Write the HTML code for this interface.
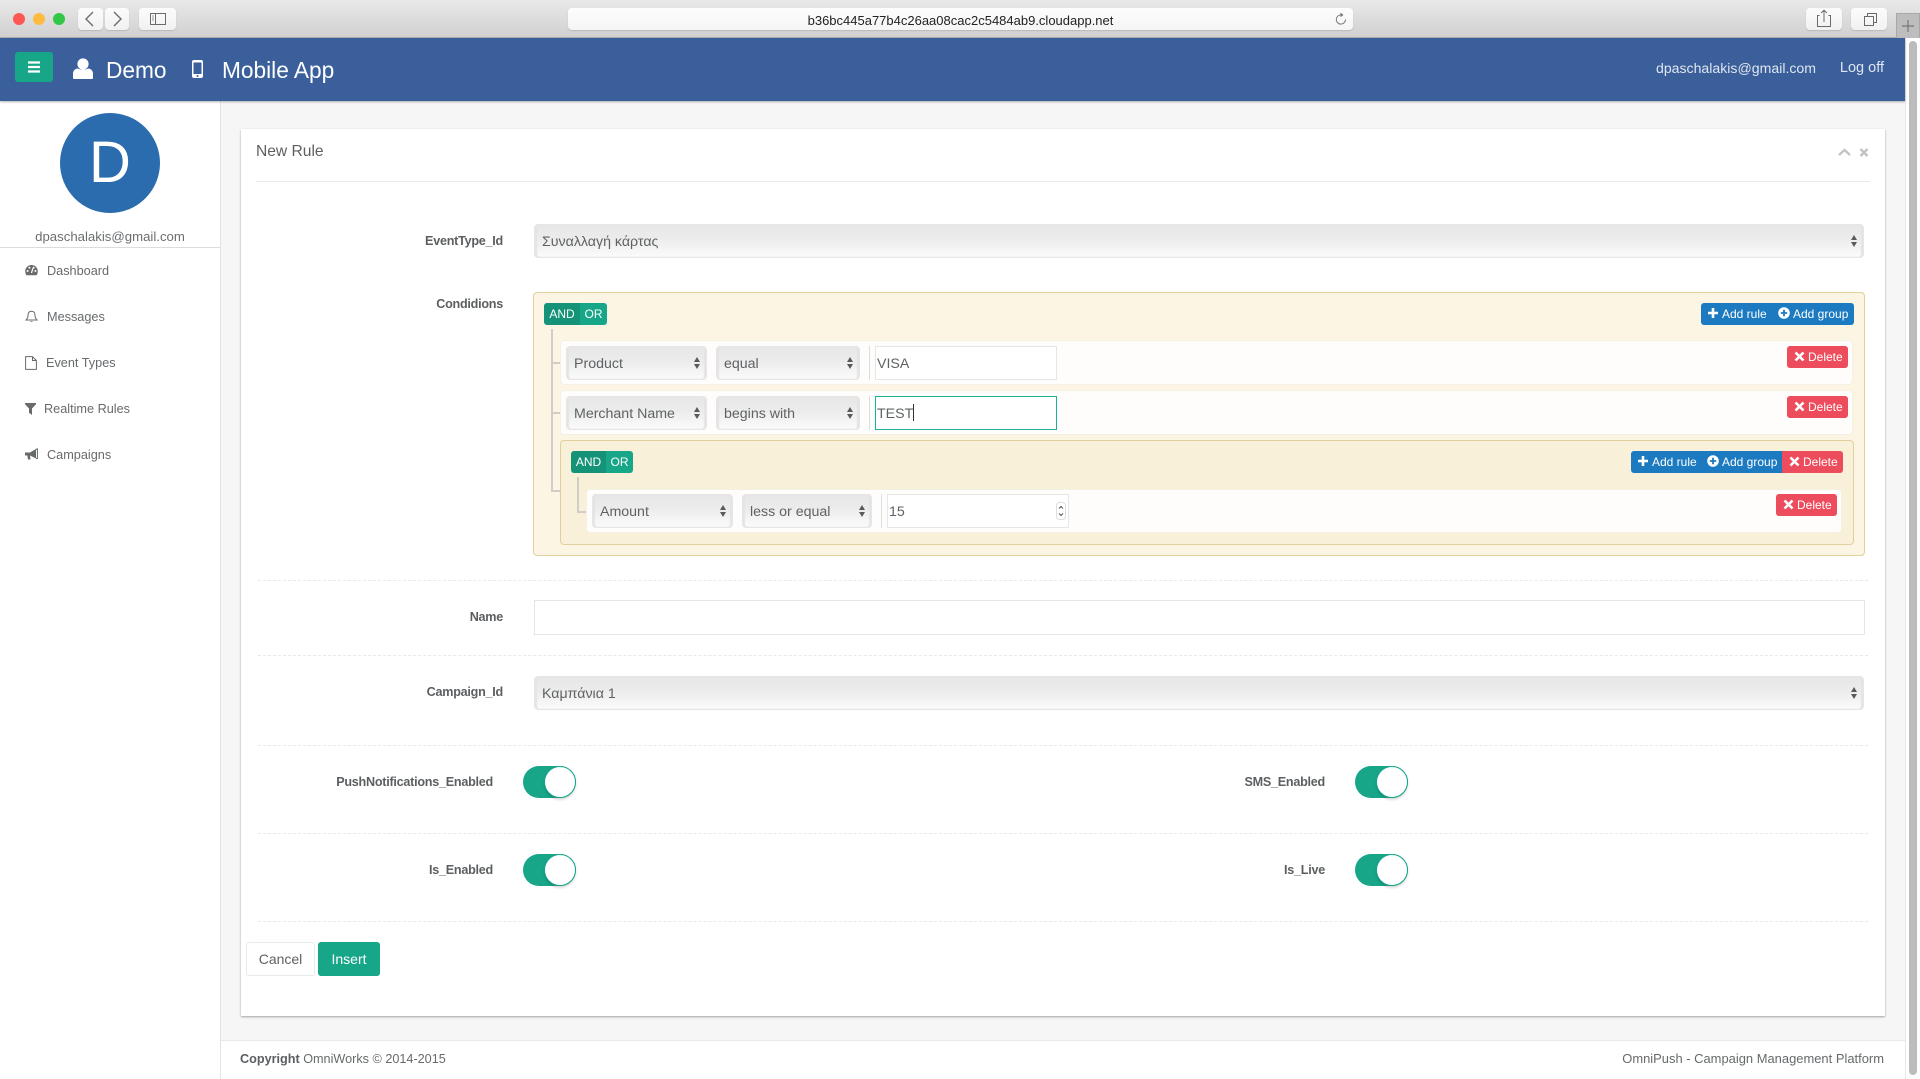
<!DOCTYPE html>
<html><head><meta charset="utf-8"><title>New Rule</title>
<style>
html,body{margin:0;padding:0;width:1920px;height:1079px;overflow:hidden;background:#f6f6f6}
body{position:relative;font-family:"Liberation Sans","Noto Sans CJK SC",sans-serif;color:#676a6c;font-size:13px}
.a{position:absolute;box-sizing:border-box}
.t{position:absolute;white-space:nowrap}
.lb{position:absolute;white-space:nowrap;font-weight:bold;font-size:12.6px;letter-spacing:-.25px;color:#5c5f61;line-height:20px}
.sel{position:absolute;box-sizing:border-box;border:1px solid #e6e6e6;border-radius:4px;background:linear-gradient(#e7e7e7,#ececec 45%,#fbfbfb);box-shadow:inset -2px 0 1px #e4e4e4,inset 2px 0 1px #e4e4e4;color:#5f6264;font-size:14.2px;line-height:34px;padding-left:7px;white-space:nowrap}
.sel svg{position:absolute;right:5px;top:50%;margin-top:-7px}
.inp{position:absolute;box-sizing:border-box;border:1px solid #e5e6e7;background:#fff;color:#5f6264;font-size:14.2px;line-height:34px;padding-left:1px;white-space:nowrap}
.btn{position:absolute;box-sizing:border-box;height:22px;line-height:22px;color:#fff;font-size:12px;white-space:nowrap}
.g{background:#18a689}.gd{background:#159378}.b{background:#1c7ac0}.r{background:#ed4c5c}
.btn svg{vertical-align:-1px;margin-right:3px}
.grp{position:absolute;box-sizing:border-box;border:1px solid #e3cf9d;border-radius:4px}
.rule{position:absolute;box-sizing:border-box;background:#fefdfb;border:1px solid #f4f0e4;border-radius:4px}
.ln{position:absolute;background:#cfcdc6}
.dash{position:absolute;left:258px;width:1610px;height:0;border-top:1px dashed #e7eaec}
.tog{position:absolute;width:53px;height:32px;border-radius:16px;background:#18a689}
.tog i{position:absolute;right:0;top:0;width:32px;height:32px;border-radius:50%;background:#fff;box-sizing:border-box;border:1px solid #18a689;box-shadow:0 2px 2px rgba(0,0,0,.15)}
.nav{position:absolute;white-space:nowrap;font-size:12.7px;color:#676a6c;line-height:18px}
.cb{position:absolute;box-sizing:border-box;height:22px;top:8px;background:linear-gradient(#fcfcfc,#f1f1f1);border-radius:4px;box-shadow:0 1px 1px #b9b9b9}
svg{display:block}
.btn svg{display:inline-block}
</style></head><body>

<!-- browser chrome -->
<div class="a" style="left:0;top:0;width:1920px;height:38px;background:linear-gradient(#e9e9e9,#d0d0d0);border-bottom:1px solid #aeaeae"></div>
<div class="a" style="left:13px;top:13px;width:12px;height:12px;border-radius:50%;background:#fc5753"></div>
<div class="a" style="left:33px;top:13px;width:12px;height:12px;border-radius:50%;background:#fdbc40"></div>
<div class="a" style="left:53px;top:13px;width:12px;height:12px;border-radius:50%;background:#33c748"></div>
<div class="cb" style="left:78px;width:25px"><svg width="25" height="22"><path d="M15 4L8 11L15 18" fill="none" stroke="#6b6b6b" stroke-width="1.4"/></svg></div>
<div class="cb" style="left:105px;width:24px"><svg width="24" height="22"><path d="M9 4L16 11L9 18" fill="none" stroke="#6b6b6b" stroke-width="1.4"/></svg></div>
<div class="cb" style="left:139px;width:37px"><svg width="37" height="22"><rect x="11.5" y="5.5" width="15" height="11" fill="none" stroke="#6b6b6b"/><path d="M16.5 5.5V16.5" stroke="#6b6b6b"/><path d="M13 8h2M13 10h2M13 12h2" stroke="#9a9a9a"/></svg></div>
<div class="cb" style="left:568px;width:785px;background:linear-gradient(#fdfdfd,#f5f5f5)"></div>
<div class="t" style="left:568px;width:785px;top:9px;text-align:center;line-height:23px;font-size:13px;color:#222">b36bc445a77b4c26aa08cac2c5484ab9.cloudapp.net</div>
<svg class="a" style="left:1334px;top:11px" width="14" height="16"><path d="M11.5 8.5A4.6 4.6 0 1 1 7 3.9" fill="none" stroke="#777" stroke-width="1"/><path d="M6.5 1.5L9.5 4L6.5 6.2Z" fill="#777"/></svg>
<div class="cb" style="left:1806px;width:36px"><svg width="36" height="22"><path d="M13.5 8.5H11.5V19.5H24.5V8.5H22.5" transform="translate(0,-1)" fill="none" stroke="#6b6b6b"/><path d="M18 14V2.5M15 5L18 2.2L21 5" fill="none" stroke="#6b6b6b"/></svg></div>
<div class="cb" style="left:1851px;width:36px"><svg width="36" height="22"><rect x="13.5" y="8.5" width="9" height="9" fill="none" stroke="#6b6b6b"/><path d="M16.5 8V5.5H25.5V14.5H23" fill="none" stroke="#6b6b6b"/></svg></div>
<div class="a" style="left:1896px;top:13px;width:24px;height:25px;background:#bdbdbd;border:1px solid #a8a8a8;border-bottom:0"><svg width="22" height="24"><path d="M11 6V18M5 12H17" stroke="#777" stroke-width="1.2"/></svg></div>

<!-- header -->
<div class="a" style="left:0;top:38px;width:1905px;height:63px;background:#3a5f9b;box-shadow:0 1px 2px rgba(0,0,0,.3);z-index:3">
  <div class="a" style="left:15px;top:14px;width:38px;height:30px;background:#18a689;border-radius:3px"><svg width="38" height="30"><path d="M13 10.5H25M13 15H25M13 19.5H25" stroke="#fff" stroke-width="2.2"/></svg></div>
  <svg class="a" style="left:73px;top:20px" width="20" height="21"><circle cx="10" cy="6" r="5.6" fill="#fff"/><path d="M0 20V15.5C0 12.5 2.5 10.5 5 10.5C7 12 13 12 15 10.5C17.5 10.5 20 12.5 20 15.5V20Q20 21 19 21H1Q0 21 0 20Z" fill="#fff"/></svg>
  <div class="t" style="left:106px;top:17px;font-size:22.7px;line-height:30px;color:#fff">Demo</div>
  <svg class="a" style="left:192px;top:22px" width="11" height="18"><rect x="0" y="0" width="11" height="18" rx="2" fill="#fff"/><rect x="1.5" y="2.5" width="8" height="11.5" fill="#3a5f9b"/><circle cx="5.5" cy="16" r="1" fill="#3a5f9b"/></svg>
  <div class="t" style="left:222px;top:17px;font-size:22.7px;line-height:30px;color:#fff">Mobile App</div>
  <div class="t" style="right:89px;top:20px;font-size:14.1px;line-height:20px;color:#dfe6f0">dpaschalakis@gmail.com</div>
  <div class="t" style="right:21px;top:20px;font-size:14.5px;line-height:20px;color:#dfe6f0">Log off</div>
</div>

<!-- scrollbar -->
<div class="a" style="left:1905px;top:38px;width:15px;height:1041px;background:#fff;border-left:1px solid #e8e8e8"></div>
<div class="a" style="left:1909px;top:41px;width:8px;height:1034px;background:#bcbcbc;border-radius:4px"></div>

<!-- sidebar -->
<div class="a" style="left:0;top:101px;width:221px;height:978px;background:#fff;border-right:1px solid #e3e3e3"></div>
<div class="a" style="left:60px;top:113px;width:100px;height:100px;border-radius:50%;background:#2b6cae"></div>
<div class="t" style="left:60px;top:113px;width:100px;text-align:center;line-height:100px;font-size:58px;color:#fff">D</div>
<div class="t" style="left:0;width:220px;top:227px;text-align:center;font-size:13.2px;line-height:20px;color:#6b6e70">dpaschalakis@gmail.com</div>
<div class="a" style="left:0;top:247px;width:220px;height:1px;background:#dcdcdc"></div>

<svg class="a" style="left:25px;top:264px" width="13" height="12"><path d="M6.5 1A6.3 6.3 0 0 0 .2 7.3Q.2 9.6 1.4 11.2H11.6Q12.8 9.6 12.8 7.3A6.3 6.3 0 0 0 6.5 1Z" fill="#686b6d"/><circle cx="2.6" cy="7" r="1" fill="#fff"/><circle cx="4.4" cy="3.7" r="1" fill="#fff"/><circle cx="8.6" cy="3.7" r="1" fill="#fff"/><circle cx="10.4" cy="7" r="1" fill="#fff"/><path d="M6.5 9L7.8 4.5" stroke="#fff" stroke-width="1.2"/></svg>
<div class="nav" style="left:47px;top:262px">Dashboard</div>
<svg class="a" style="left:25px;top:310px" width="13" height="13"><path d="M6.5 1.2C3.8 1.2 3 3.2 3 5.5C3 8 2 9 1 10H12C11 9 10 8 10 5.5C10 3.2 9.2 1.2 6.5 1.2Z" fill="none" stroke="#686b6d" stroke-width="1"/><path d="M5 11.2Q6.5 13 8 11.2Z" fill="#686b6d"/></svg>
<div class="nav" style="left:47px;top:308px">Messages</div>
<svg class="a" style="left:25px;top:356px" width="12" height="14"><path d="M.6.6H7.5L11.4 4.5V13.4H.6Z M7.5.6V4.5H11.4" fill="none" stroke="#686b6d" stroke-width="1"/></svg>
<div class="nav" style="left:46px;top:354px">Event Types</div>
<svg class="a" style="left:25px;top:403px" width="11" height="12"><path d="M0 0H11V1.2L7 5.5V12L4 9.8V5.5L0 1.2Z" fill="#686b6d"/></svg>
<div class="nav" style="left:44px;top:400px">Realtime Rules</div>
<svg class="a" style="left:25px;top:448px" width="13" height="13"><path d="M0 4.5H5L11 1V10.5L5 7.5L5.5 11.5H3L2.3 7.5H0Z" fill="#686b6d"/><path d="M10.8 1.5L12.4 .9V10.6L11 10.3" fill="none" stroke="#686b6d"/></svg>
<div class="nav" style="left:47px;top:446px">Campaigns</div>

<!-- card -->
<div class="a" style="left:241px;top:129px;width:1644px;height:887px;background:#fff;box-shadow:0 1px 2px rgba(0,0,0,.35)"></div>
<div class="t" style="left:256px;top:142px;font-size:15.6px;line-height:20px;color:#5c5f61">New Rule</div>
<svg class="a" style="left:1837px;top:147px" width="34" height="11"><path d="M2 8L7.5 3L13 8" fill="none" stroke="#c4c4c4" stroke-width="2.4"/><path d="M23.5 2L30.5 9M30.5 2L23.5 9" stroke="#c4c4c4" stroke-width="2.6"/></svg>
<div class="a" style="left:256px;top:181px;width:1614px;height:1px;background:#e7eaec"></div>

<div class="lb" style="right:1417px;top:231px">EventType_Id</div>
<div class="sel" style="left:534px;top:224px;width:1330px;height:34px">Συναλλαγή κάρτας<svg width="8" height="14"><path d="M4 1L7 6H1ZM4 13L1 8H7Z" fill="#5a5a5a"/></svg></div>

<div class="lb" style="right:1417px;top:294px">Condidions</div>
<div class="grp" style="left:533px;top:292px;width:1332px;height:264px;background:#fcf5e4"></div>

<!-- connector lines -->
<div class="ln" style="left:551px;top:329px;width:2px;height:162px"></div>
<div class="ln" style="left:551px;top:362px;width:9px;height:2px"></div>
<div class="ln" style="left:551px;top:412px;width:9px;height:2px"></div>
<div class="ln" style="left:551px;top:490px;width:9px;height:2px"></div>

<div class="btn gd" style="left:544px;top:303px;width:36px;text-align:center;border-radius:3px 0 0 3px">AND</div>
<div class="btn g" style="left:580px;top:303px;width:27px;text-align:center;border-radius:0 3px 3px 0">OR</div>
<div class="btn b" style="left:1701px;top:303px;width:153px;border-radius:3px"></div>
<div class="btn" style="left:1707px;top:303px"><svg width="12" height="12"><path d="M6 1V11M1 6H11" stroke="#fff" stroke-width="2.6"/></svg>Add rule</div>
<div class="btn" style="left:1778px;top:303px"><svg width="12" height="12"><circle cx="6" cy="6" r="5.8" fill="#fff"/><path d="M6 2.8V9.2M2.8 6H9.2" stroke="#1c7ac0" stroke-width="1.8"/></svg>Add group</div>

<!-- rule 1 -->
<div class="rule" style="left:560px;top:340px;width:1293px;height:45px"></div>
<div class="sel" style="left:566px;top:346px;width:141px;height:34px">Product<svg width="8" height="14"><path d="M4 1L7 6H1ZM4 13L1 8H7Z" fill="#5a5a5a"/></svg></div>
<div class="sel" style="left:716px;top:346px;width:144px;height:34px">equal<svg width="8" height="14"><path d="M4 1L7 6H1ZM4 13L1 8H7Z" fill="#5a5a5a"/></svg></div>
<div class="a" style="left:869px;top:346px;width:1px;height:34px;background:#ddd"></div>
<div class="inp" style="left:875px;top:346px;width:182px;height:34px">VISA</div>
<div class="btn r" style="left:1787px;top:346px;width:61px;border-radius:3px;padding-left:7px"><svg width="11" height="11"><path d="M1.5 1.5L9.5 9.5M9.5 1.5L1.5 9.5" stroke="#fff" stroke-width="2.6"/></svg>Delete</div>

<!-- rule 2 -->
<div class="rule" style="left:560px;top:390px;width:1293px;height:45px"></div>
<div class="sel" style="left:566px;top:396px;width:141px;height:34px">Merchant Name<svg width="8" height="14"><path d="M4 1L7 6H1ZM4 13L1 8H7Z" fill="#5a5a5a"/></svg></div>
<div class="sel" style="left:716px;top:396px;width:144px;height:34px">begins with<svg width="8" height="14"><path d="M4 1L7 6H1ZM4 13L1 8H7Z" fill="#5a5a5a"/></svg></div>
<div class="a" style="left:869px;top:396px;width:1px;height:34px;background:#ddd"></div>
<div class="inp" style="left:875px;top:396px;width:182px;height:34px;border-color:#1ab394">TEST<span style="display:inline-block;width:1px;height:17px;background:#333;vertical-align:-3px"></span></div>
<div class="btn r" style="left:1787px;top:396px;width:61px;border-radius:3px;padding-left:7px"><svg width="11" height="11"><path d="M1.5 1.5L9.5 9.5M9.5 1.5L1.5 9.5" stroke="#fff" stroke-width="2.6"/></svg>Delete</div>

<!-- nested group -->
<div class="grp" style="left:560px;top:440px;width:1294px;height:105px;background:#f9f0da"></div>
<div class="ln" style="left:577px;top:477px;width:2px;height:34px"></div>
<div class="ln" style="left:577px;top:511px;width:10px;height:2px"></div>
<div class="btn gd" style="left:571px;top:451px;width:35px;text-align:center;border-radius:3px 0 0 3px">AND</div>
<div class="btn g" style="left:606px;top:451px;width:27px;text-align:center;border-radius:0 3px 3px 0">OR</div>
<div class="btn b" style="left:1631px;top:451px;width:151px;border-radius:3px 0 0 3px"></div>
<div class="btn" style="left:1637px;top:451px"><svg width="12" height="12"><path d="M6 1V11M1 6H11" stroke="#fff" stroke-width="2.6"/></svg>Add rule</div>
<div class="btn" style="left:1707px;top:451px"><svg width="12" height="12"><circle cx="6" cy="6" r="5.8" fill="#fff"/><path d="M6 2.8V9.2M2.8 6H9.2" stroke="#1c7ac0" stroke-width="1.8"/></svg>Add group</div>
<div class="btn r" style="left:1782px;top:451px;width:61px;border-radius:0 3px 3px 0;padding-left:7px"><svg width="11" height="11"><path d="M1.5 1.5L9.5 9.5M9.5 1.5L1.5 9.5" stroke="#fff" stroke-width="2.6"/></svg>Delete</div>

<div class="rule" style="left:586px;top:489px;width:1256px;height:44px"></div>
<div class="sel" style="left:592px;top:494px;width:141px;height:34px">Amount<svg width="8" height="14"><path d="M4 1L7 6H1ZM4 13L1 8H7Z" fill="#5a5a5a"/></svg></div>
<div class="sel" style="left:742px;top:494px;width:130px;height:34px">less or equal<svg width="8" height="14"><path d="M4 1L7 6H1ZM4 13L1 8H7Z" fill="#5a5a5a"/></svg></div>
<div class="a" style="left:881px;top:494px;width:1px;height:34px;background:#ddd"></div>
<div class="inp" style="left:887px;top:494px;width:182px;height:34px">15
  <svg class="a" style="right:2px;top:7px" width="10" height="18"><rect x=".5" y=".5" width="9" height="17" rx="3" fill="#fff" stroke="#ddd"/><path d="M3 6.5L5 4.5L7 6.5M3 11.5L5 13.5L7 11.5" fill="none" stroke="#555"/></svg>
</div>
<div class="btn r" style="left:1776px;top:494px;width:61px;border-radius:3px;padding-left:7px"><svg width="11" height="11"><path d="M1.5 1.5L9.5 9.5M9.5 1.5L1.5 9.5" stroke="#fff" stroke-width="2.6"/></svg>Delete</div>

<div class="dash" style="top:580px"></div>

<div class="lb" style="right:1417px;top:607px">Name</div>
<div class="inp" style="left:534px;top:600px;width:1331px;height:35px"></div>
<div class="dash" style="top:655px"></div>

<div class="lb" style="right:1417px;top:682px">Campaign_Id</div>
<div class="sel" style="left:534px;top:676px;width:1330px;height:34px">Καμπάνια 1<svg width="8" height="14"><path d="M4 1L7 6H1ZM4 13L1 8H7Z" fill="#5a5a5a"/></svg></div>
<div class="dash" style="top:745px"></div>

<div class="lb" style="right:1427px;top:772px">PushNotifications_Enabled</div>
<div class="tog" style="left:523px;top:766px"><i></i></div>
<div class="lb" style="right:595px;top:772px">SMS_Enabled</div>
<div class="tog" style="left:1355px;top:766px"><i></i></div>
<div class="dash" style="top:833px"></div>

<div class="lb" style="right:1427px;top:860px">Is_Enabled</div>
<div class="tog" style="left:523px;top:854px"><i></i></div>
<div class="lb" style="right:595px;top:860px">Is_Live</div>
<div class="tog" style="left:1355px;top:854px"><i></i></div>
<div class="dash" style="top:921px"></div>

<div class="a" style="left:246px;top:942px;width:69px;height:34px;background:#fff;border:1px solid #e7eaec;border-radius:3px;text-align:center;line-height:32px;font-size:14px;color:#5f6264">Cancel</div>
<div class="a" style="left:318px;top:942px;width:62px;height:34px;background:#18a689;border-radius:3px;text-align:center;line-height:34px;font-size:14px;color:#fff">Insert</div>

<!-- footer -->
<div class="a" style="left:221px;top:1040px;width:1684px;height:39px;background:#fff;border-top:1px solid #e7eaec"></div>
<div class="t" style="left:240px;top:1050px;font-size:12.65px;line-height:18px;color:#676a6c"><b style="color:#5c5f61">Copyright</b> OmniWorks © 2014-2015</div>
<div class="t" style="right:36px;top:1050px;font-size:12.95px;line-height:18px;color:#676a6c">OmniPush - Campaign Management Platform</div>

</body></html>
